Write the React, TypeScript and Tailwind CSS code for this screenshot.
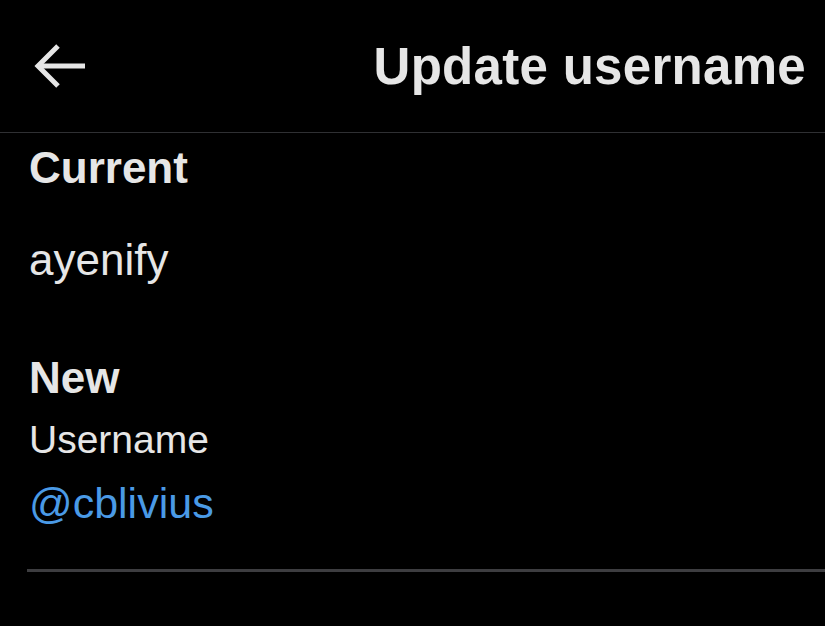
import React from "react";

export default function App() {
  const font = { fontFamily: '"Liberation Sans", Arial, sans-serif' };

  return (
    <div className="w-[825px] h-[626px] bg-black overflow-hidden text-[#e6e6e6]" style={font}>
      <header className="h-[133px] flex items-center justify-between pl-[33px] pr-[19px] border-b border-[#2f3033]">
        <svg width="54" height="46" viewBox="0 0 54 46" fill="none" stroke="#e6e6e6" strokeWidth="5" strokeLinecap="butt">
          <line x1="52" y1="23" x2="5" y2="23" />
          <polyline points="25,3 5,23 25,43" strokeLinejoin="miter" />
        </svg>
        <h1 className="text-[51px] leading-[51px] font-bold tracking-[0.3px]">Update username</h1>
      </header>

      <section className="pl-[29px] pt-[13px]">
        <p className="text-[44px] leading-[44px] font-bold">Current</p>
        <p className="text-[44px] leading-[44px] mt-[48px]">ayenify</p>

        <p className="text-[44px] leading-[44px] font-bold mt-[74px]">New</p>
        <p className="text-[39px] leading-[39px] mt-[20px]">Username</p>
        <p className="text-[43px] leading-[43px] mt-[23px] text-[#4a9ae6]">@cblivius</p>
      </section>

      <div className="ml-[27px] mt-[44px] h-[3px] bg-[#3d3d40]" />
    </div>
  );
}
